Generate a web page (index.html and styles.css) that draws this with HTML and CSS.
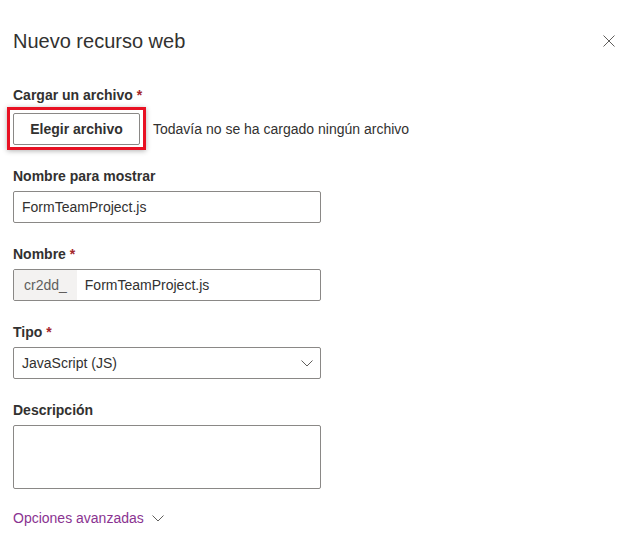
FILE: index.html
```html
<!DOCTYPE html>
<html>
<head>
	<meta charset="utf-8">
	<title>Nuevo recurso web</title>
	<link rel="stylesheet" href="styles.css">
</head>
<body>

	<div class="panel">
		<div class="panel-header">
			<h1 class="panel-title">Nuevo recurso web</h1>
			<button class="close" type="button" aria-label="Cerrar">
				<svg width="12" height="12" viewBox="0 0 12 12">
					<path d="M0.5 0.5 L11.5 11.5 M11.5 0.5 L0.5 11.5" stroke="#605e5c" stroke-width="1" fill="none"/>
				</svg>
			</button>
		</div>

		<div class="panel-body">
			<div class="field field-upload">
				<label class="field-label">Cargar un archivo <span class="req">*</span></label>
				<div class="upload-row">
					<span class="mark">
						<button class="btn" type="button">Elegir archivo</button>
					</span>
					<span class="upload-status">Todavía no se ha cargado ningún archivo</span>
				</div>
			</div>

			<div class="field">
				<label class="field-label" for="display">Nombre para mostrar</label>
				<div class="box">
					<input class="box-input" id="display" type="text" value="FormTeamProject.js">
				</div>
			</div>

			<div class="field">
				<label class="field-label" for="name">Nombre <span class="req">*</span></label>
				<div class="box">
					<span class="prefix">cr2dd_</span>
					<input class="box-input" id="name" type="text" value="FormTeamProject.js">
				</div>
			</div>

			<div class="field">
				<label class="field-label">Tipo <span class="req">*</span></label>
				<div class="box dropdown">
					<span class="dropdown-value">JavaScript (JS)</span>
					<svg class="chevron" width="12" height="7" viewBox="0 0 12 7">
						<path d="M0.5 0.5 L6 6 L11.5 0.5" stroke="#605e5c" stroke-width="1" fill="none"/>
					</svg>
				</div>
			</div>

			<div class="field">
				<label class="field-label" for="desc">Descripción</label>
				<textarea class="area" id="desc"></textarea>
			</div>

			<a class="advanced" href="#">
				Opciones avanzadas
				<svg class="chevron" width="12" height="7" viewBox="0 0 12 7">
					<path d="M0.5 0.5 L6 6 L11.5 0.5" stroke="#605e5c" stroke-width="1" fill="none"/>
				</svg>
			</a>
		</div>
	</div>

</body>
</html>
```

FILE: styles.css
```css
body {
	margin : 0;
	background : #fff;
	color : #323130;
	font-family : "Liberation Sans", Arial, sans-serif;
	font-size : 14px;
}

.panel {
	padding : 0 26px 0 13px;
}

.panel-header {
	display : flex;
	align-items : center;
	justify-content : space-between;
	padding-top : 27px;
}

.panel-title {
	margin : 0;
	font-size : 20px;
	font-weight : 400;
	line-height : 28px;
	color : #323130;
}

.close {
	border : 0;
	background : none;
	padding : 0;
	width : 12px;
	height : 12px;
	display : flex;
}

.panel-body {
	padding-top : 25px;
}

.field {
	width : 308px;
	margin-bottom : 16px;
}

.field-label {
	display : block;
	padding : 5px 0;
	line-height : 20px;
	font-weight : 700;
	color : #323130;
}

.req {
	color : #a4262c;
}

.field-upload {
	width : auto;
	margin-bottom : 16px;
}

.upload-row {
	display : flex;
	align-items : center;
	gap : 13px;
	padding-top : 3px;
}

.mark {
	position : relative;
	display : flex;
}

/* red box drawn over the button */
.mark::after {
	content : "";
	position : absolute;
	top : -6px;
	left : -6px;
	right : -6px;
	bottom : -5px;
	border : 3px solid #e81123;
	box-shadow : 0 1px 5px rgba(0, 0, 0, 0.3);
	pointer-events : none;
}

.btn {
	height : 32px;
	padding : 0 16px;
	min-width : 127px;
	border : 1px solid #8a8886;
	border-radius : 2px;
	background : #fff;
	color : #323130;
	font : inherit;
	font-weight : 700;
}

.upload-status {
	color : #323130;
}

.box {
	display : flex;
	align-items : center;
	height : 32px;
	box-sizing : border-box;
	border : 1px solid #8a8886;
	border-radius : 2px;
	background : #fff;
	overflow : hidden;
}

.box-input {
	flex : 1;
	min-width : 0;
	height : 100%;
	border : 0;
	outline : 0;
	padding : 0 8px;
	font : inherit;
	color : #323130;
	background : transparent;
}

.prefix {
	display : flex;
	align-items : center;
	height : 100%;
	padding : 0 10px;
	background : #f3f2f1;
	color : #605e5c;
}

.dropdown {
	justify-content : space-between;
	padding : 0 7px 0 8px;
}

.area {
	display : block;
	width : 308px;
	height : 64px;
	box-sizing : border-box;
	border : 1px solid #8a8886;
	border-radius : 2px;
	resize : none;
	font : inherit;
	padding : 6px 8px;
}

.advanced {
	display : inline-flex;
	align-items : center;
	gap : 8px;
	margin-top : 3px;
	line-height : 20px;
	color : #8a3391;
	text-decoration : none;
}
```
